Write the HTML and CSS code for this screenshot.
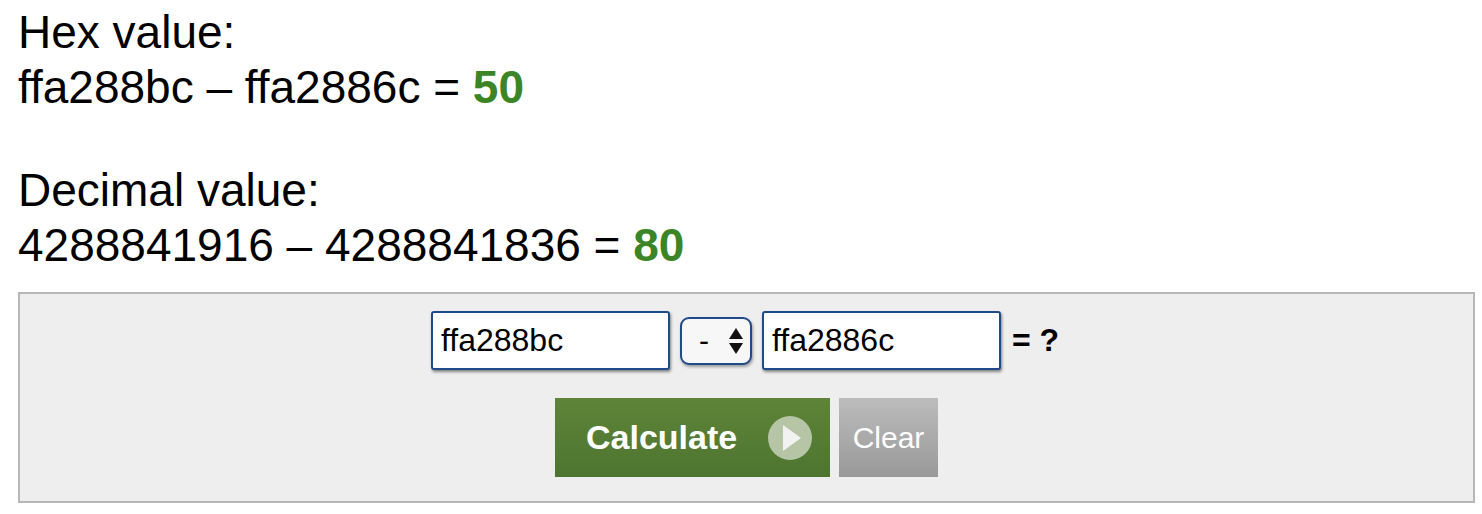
FILE: index.html
```html
<!DOCTYPE html>
<html lang="en">
<head>
<meta charset="utf-8">
<title>Hex Calculator</title>
<link rel="stylesheet" href="styles.css">
</head>
<body>
<div class="page">
  <p class="result">Hex value:<br>ffa288bc – ffa2886c = <b class="answer">50</b></p>
  <p class="result">Decimal value:<br>4288841916 – 4288841836 = <b class="answer">80</b></p>
  <form class="panel">
    <div class="inputs">
      <input class="field" type="text" value="ffa288bc">
      <div class="select">
        <span class="op">-</span>
        <svg class="arrows" width="16" height="28" viewBox="0 0 16 28">
          <path d="M8 1 L15 12 L1 12 Z" fill="#111"/>
          <path d="M1 16 L15 16 L8 27 Z" fill="#111"/>
        </svg>
      </div>
      <input class="field" type="text" value="ffa2886c">
      <span class="eq">= ?</span>
    </div>
    <div class="buttons">
      <button type="button" class="btn-calc">Calculate
        <svg class="play" width="44" height="44" viewBox="0 0 44 44">
          <circle cx="22" cy="22" r="22" fill="#b5c5a6"/>
          <path d="M15 9 L33 22 L15 35 Z" fill="#f2f2f2"/>
        </svg>
      </button>
      <button type="button" class="btn-clear">Clear</button>
    </div>
  </form>
</div>
</body>
</html>
```

FILE: styles.css
```css
html, body {
  margin: 0;
  padding: 0;
  background: #ffffff;
}

body {
  font-family: "Liberation Sans", Arial, sans-serif;
  color: #000;
}

.page {
  padding: 5px 7px 0 18px;
}

.result {
  margin: 0 0 48px 0;
  font-size: 46px;
  line-height: 55px;
}

.result:nth-of-type(2) {
  margin-bottom: 19px;
}

.answer {
  color: #3b8526;
  font-weight: bold;
}

.panel {
  margin: 0;
  border: 2px solid #b7b7b7;
  background: #eeeeee;
  padding: 17px 0 24px 0;
  display: flex;
  flex-direction: column;
  align-items: center;
  gap: 28px;
}

.inputs {
  display: flex;
  align-items: center;
  gap: 10px;
  margin-right: 3px;
}

.field {
  box-sizing: border-box;
  width: 239px;
  height: 59px;
  margin: 0;
  border: 2px solid #1f4b8a;
  border-radius: 3px;
  background: #fff;
  padding: 0 8px;
  font-family: "Liberation Sans", Arial, sans-serif;
  font-size: 32px;
  color: #000;
  box-shadow: 1px 2px 3px rgba(0, 0, 0, 0.45);
  outline: none;
}

.select {
  box-sizing: border-box;
  width: 72px;
  height: 48px;
  border: 2px solid #1f4b8a;
  border-radius: 9px;
  background: #f7f7f7;
  display: flex;
  align-items: center;
  justify-content: space-between;
  padding: 0 6px 0 17px;
  box-shadow: 1px 2px 3px rgba(0, 0, 0, 0.35);
}

.op {
  font-size: 30px;
  line-height: 1;
}

.eq {
  font-size: 32px;
  font-weight: bold;
  margin-left: 1px;
}

.buttons {
  display: flex;
  gap: 9px;
}

.btn-calc,
.btn-clear {
  border: none;
  margin: 0;
  height: 79px;
  font-family: "Liberation Sans", Arial, sans-serif;
  color: #fff;
  cursor: pointer;
  display: flex;
  align-items: center;
}

.btn-calc {
  width: 275px;
  padding: 0 18px 0 31px;
  justify-content: space-between;
  background: linear-gradient(#5e8439, #4e7530);
  font-size: 34px;
  font-weight: bold;
}

.btn-clear {
  width: 99px;
  padding: 0;
  justify-content: center;
  background: linear-gradient(#bcbcbc, #999999);
  font-size: 30px;
}
```
